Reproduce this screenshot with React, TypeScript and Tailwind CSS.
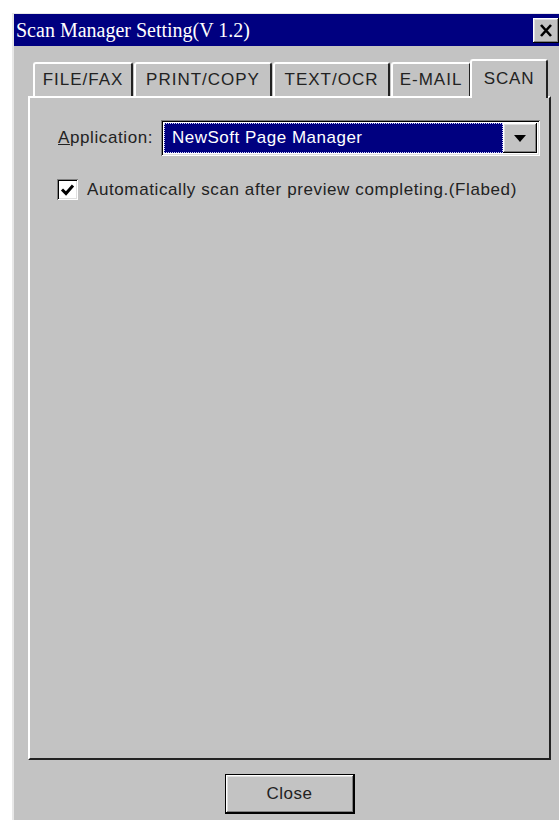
import React from "react";

const raised =
  "shadow-[inset_-1px_-1px_0_#000,inset_1px_1px_0_#fff,inset_-2px_-2px_0_#808080,inset_2px_2px_0_#dfdfdf]";
const sunken =
  "shadow-[inset_1px_1px_0_#808080,inset_-1px_-1px_0_#fff,inset_2px_2px_0_#000,inset_-2px_-2px_0_#dfdfdf]";

const tabs = [
  { label: "FILE/FAX", w: "w-[100px]" },
  { label: "PRINT/COPY", w: "w-[138px]" },
  { label: "TEXT/OCR", w: "w-[117px]" },
  { label: "E-MAIL", w: "w-[80px]" },
  { label: "SCAN", w: "w-[78px]", active: true },
];

function Tab({ label, w, active }: { label: string; w: string; active?: boolean }) {
  if (active) {
    return (
      <div
        className={`${w} h-[39px] -mb-[2px] -ml-[2px] relative z-10 bg-[#c3c3c3] rounded-t-[3px] border-t-2 border-l-2 border-white border-r-2 border-r-[#222] flex justify-center pt-[5px] text-[17px] tracking-[0.8px] text-[#222]`}
      >
        {label}
      </div>
    );
  }
  return (
    <div
      className={`${w} h-[34px] rounded-t-[3px] border-t-2 border-l-2 border-white border-r-2 border-r-[#222] flex items-center justify-center text-[17px] tracking-[1px] text-[#222]`}
    >
      {label}
    </div>
  );
}

export default function App() {
  return (
    <div
      className="w-[559px] h-[820px] overflow-hidden bg-white pt-[13px] pl-[12px]"
      style={{ fontFamily: '"Liberation Sans", Arial, sans-serif' }}
    >
      <div className="w-[547px] h-[807px] bg-[#c3c3c3] border-l-2 border-t border-[#e8e8e8] flex flex-col">
        {/* title bar */}
        <div className="h-[32px] bg-[#000080] flex items-center justify-between shrink-0">
          <span
            className="pl-[2px] text-white text-[20px] leading-none"
            style={{ fontFamily: '"Liberation Serif", "Times New Roman", serif' }}
          >
            Scan Manager Setting(V 1.2)
          </span>
          <div className={`w-[26px] h-[25px] bg-[#c3c3c3] ${raised} flex items-center justify-center`}>
            <svg width="14" height="13" viewBox="0 0 14 13">
              <path d="M2 1 L12 12 M12 1 L2 12" stroke="#000" strokeWidth="2.6" />
            </svg>
          </div>
        </div>

        {/* body */}
        <div className="flex flex-col pl-[14px] pt-[13px]">
          <div className="flex items-end pl-[5px] gap-[1px]">
            {tabs.map((t) => (
              <Tab key={t.label} {...t} />
            ))}
          </div>

          <div className="w-[523px] h-[664px] border-t-2 border-l-2 border-white border-r-2 border-b-2 border-r-[#222] border-b-[#222] pl-[28px] pt-[22px]">
            <div className="flex items-center">
              <span className="text-[17px] tracking-[0.6px] text-[#222] w-[103px]">
                <span className="underline">A</span>pplication:
              </span>
              <div className={`w-[379px] h-[36px] bg-white ${sunken} flex items-center p-[3px]`}>
                <div className="flex-1 h-full bg-[#000080] border border-dotted border-[#d0d0ff] flex items-center pl-[7px] text-white text-[17px] tracking-[0.5px]">
                  NewSoft Page Manager
                </div>
                <div className={`w-[34px] h-full bg-[#c3c3c3] ${raised} flex items-center justify-center`}>
                  <svg width="12" height="7" viewBox="0 0 12 7">
                    <path d="M0 0 H12 L6 7 Z" fill="#000" />
                  </svg>
                </div>
              </div>
            </div>

            <div className="flex items-center mt-[21px] -ml-[1px]">
              <div className={`w-[21px] h-[21px] bg-white ${sunken} flex items-center justify-center`}>
                <svg width="15" height="14" viewBox="0 0 15 14">
                  <path d="M2 6.5 L6 10.5 L13 2.5" stroke="#000" strokeWidth="3" fill="none" />
                </svg>
              </div>
              <span className="ml-[9px] text-[17px] text-[#222] tracking-[0.6px]">
                Automatically scan after preview completing.(Flabed)
              </span>
            </div>
          </div>

          <div className="w-[523px] flex justify-center mt-[14px]">
            <button
              className={`w-[130px] h-[40px] border border-black bg-[#c3c3c3] ${raised} text-[17px] tracking-[0.5px] text-[#222]`}
            >
              Close
            </button>
          </div>
        </div>
      </div>
    </div>
  );
}
